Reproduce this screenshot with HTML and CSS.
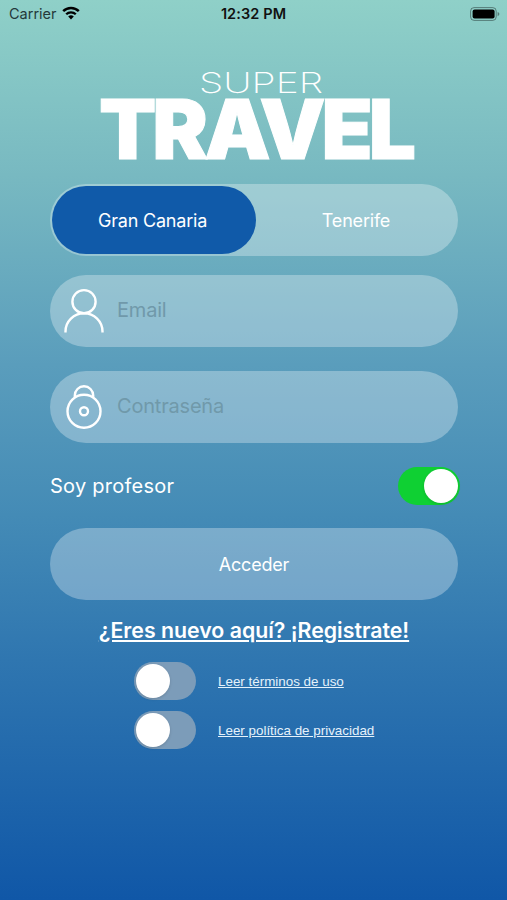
FILE: index.html
```
<!DOCTYPE html>
<html lang="es">
<head>
  <meta charset="UTF-8" />
  <meta name="viewport" content="width=device-width, initial-scale=1.0"/>
  <title>Super Travel</title>
  <link rel="stylesheet" href="styles.css">
</head>
<body>

<header class="status-bar">
  <div class="carrier">
    <span>Carrier</span>
    <svg class="wifi" viewBox="0 0 18 14" width="18" height="14">
      <path d="M1.2 5.2a11 11 0 0 1 15.6 0" fill="none" stroke="#000" stroke-width="2.5"/>
      <path d="M4.2 8.3a6.8 6.8 0 0 1 9.6 0" fill="none" stroke="#000" stroke-width="2.3"/>
      <path d="M9 13.6l-2.8-3a4.2 4.2 0 0 1 5.6 0z"/>
    </svg>
  </div>
  <div class="time">12:32 PM</div>
  <svg class="battery" viewBox="0 0 30 14" width="30" height="14">
    <rect x=".6" y=".6" width="25.6" height="12.8" rx="3.5" fill="none" stroke="#000" stroke-opacity=".4"/>
    <rect x="2.6" y="2.4" width="22" height="9.2" rx="2"/>
    <path d="M27.6 5v4.2q1.8-.6 1.8-2.1t-1.8-2.1z" fill-opacity=".4"/>
  </svg>
</header>

<main class="login">
  <svg class="logo" viewBox="0 0 316 90" width="316" height="90">
    <text class="logo-top" x="99" y="22" textLength="124" lengthAdjust="spacingAndGlyphs">SUPER</text>
    <text class="logo-main" x="-1" y="87.5" textLength="313" lengthAdjust="spacingAndGlyphs">TRAVEL</text>
  </svg>

  <div class="segment">
    <button class="segment-item active">Gran Canaria</button>
    <button class="segment-item">Tenerife</button>
  </div>

  <label class="field email">
    <svg class="icon" viewBox="0 0 40 46" width="40" height="46">
      <circle cx="20" cy="13.7" r="11.6"/>
      <path d="M1.5 44.5v-1a18.3 18 0 0 1 37 0v1"/>
    </svg>
    <input type="email" placeholder="Email">
  </label>

  <label class="field password">
    <svg class="icon" viewBox="0 0 40 46" width="40" height="46">
      <circle cx="20" cy="27.2" r="16.5"/>
      <path d="M10.8 13.5v-2a9.2 9.2 0 0 1 18.4 0v2"/>
      <circle cx="20" cy="27.2" r="4"/>
    </svg>
    <input type="password" placeholder="Contraseña">
  </label>

  <div class="teacher">
    <span>Soy profesor</span>
    <button class="switch on" aria-label="Soy profesor"></button>
  </div>

  <button class="submit">Acceder</button>
  <a class="register" href="#">¿Eres nuevo aquí? ¡Registrate!</a>

  <div class="terms">
    <div class="term">
      <button class="switch" aria-label="Leer términos de uso"></button>
      <a href="#">Leer términos de uso</a>
    </div>
    <div class="term">
      <button class="switch" aria-label="Leer política de privacidad"></button>
      <a href="#">Leer política de privacidad</a>
    </div>
  </div>
</main>

</body>
</html>
```
FILE: styles.css
```
* {
  box-sizing: border-box;
}

body {
  margin: 0;
  height: 100vh;
  font-family: Inter, sans-serif;
  background: linear-gradient(#8fd0c8 0, #78b9c1 175px, #5a9dbc 365px, #448bb6 515px, #2f76b0 660px, #1057a7 100%);
  color: #fff;
  overflow: hidden;
}

button {
  border: none;
  padding: 0;
  font-family: inherit;
  color: inherit;
  cursor: pointer;
}

.status-bar {
  display: grid;
  grid-template-columns: 1fr auto 1fr;
  align-items: center;
  height: 27px;
  padding: 0 7px 0 9px;
  color: #111;
  font-size: 14.5px;
}

.carrier {
  display: flex;
  align-items: center;
  gap: 6px;
  color: #24393a;
}

.wifi {
  margin: -2px 0 0 -1px;
}

.time {
  font-weight: 600;
  letter-spacing: 0.1px;
  margin-right: 2px;
}

.battery {
  justify-self: end;
}

.login {
  display: flex;
  flex-direction: column;
  padding: 44px 49px 0 50px;
}

.logo {
  align-self: center;
  margin: 0 0 23px 7px;
  overflow: visible;
  fill: #fff;
}

.logo-top {
  font-size: 28px;
  font-weight: 200;
}

.logo-main {
  font-size: 82px;
  font-weight: 900;
  letter-spacing: -4px;
  stroke: #fff;
  stroke-width: 1px;
}

.segment {
  display: grid;
  grid-template-columns: 204px 1fr;
  height: 72px;
  padding: 2px;
  border-radius: 36px;
  background: rgba(255, 255, 255, 0.3);
}

.segment-item {
  border-radius: 34px;
  background: none;
  font-size: 18px;
  letter-spacing: -0.2px;
}

.segment-item.active {
  padding-right: 3px;
  background: #105aa9;
}

.field {
  display: flex;
  align-items: center;
  gap: 14px;
  height: 72px;
  margin-top: 19px;
  padding: 0 20px 0 14px;
  border-radius: 36px;
  background: rgba(255, 255, 255, 0.3);
}

.field.password {
  margin-top: 24px;
}

.icon {
  fill: none;
  stroke: #fff;
  stroke-width: 2.4;
}

.field input {
  flex: 1;
  min-width: 0;
  margin: 0 0 2px -1px;
  padding: 0;
  border: none;
  outline: none;
  background: none;
  color: #fff;
  font-family: inherit;
  font-size: 20px;
  letter-spacing: -0.2px;
}

.field input::placeholder {
  color: #7099aa;
}

.teacher {
  display: flex;
  justify-content: space-between;
  align-items: center;
  margin: 24px -2px 23px 0;
  font-size: 20px;
  letter-spacing: 0.25px;
}

.switch {
  display: flex;
  align-items: center;
  width: 62px;
  height: 38px;
  padding: 0 2px;
  border-radius: 19px;
  background: #7c9cb9;
}

.switch::before {
  content: '';
  width: 34px;
  height: 34px;
  border-radius: 50%;
  background: #fff;
  box-shadow: 0 1px 3px rgba(0, 0, 0, 0.15);
}

.switch.on {
  justify-content: flex-end;
  background: #0fd033;
}

.submit {
  height: 72px;
  border-radius: 36px;
  background: rgba(255, 255, 255, 0.3);
  font-size: 18px;
  letter-spacing: -0.2px;
}

.register {
  align-self: center;
  margin-top: 16px;
  color: #fff;
  font-size: 21.3px;
  font-weight: 600;
  line-height: 28px;
  white-space: nowrap;
}

.terms {
  display: flex;
  flex-direction: column;
  gap: 11px;
  margin: 18px 0 0 84px;
}

.term {
  display: flex;
  align-items: center;
  gap: 22px;
}

.term a {
  color: #e5f2fb;
  font-family: "Liberation Sans", Arial, sans-serif;
  font-size: 13.4px;
}
```
